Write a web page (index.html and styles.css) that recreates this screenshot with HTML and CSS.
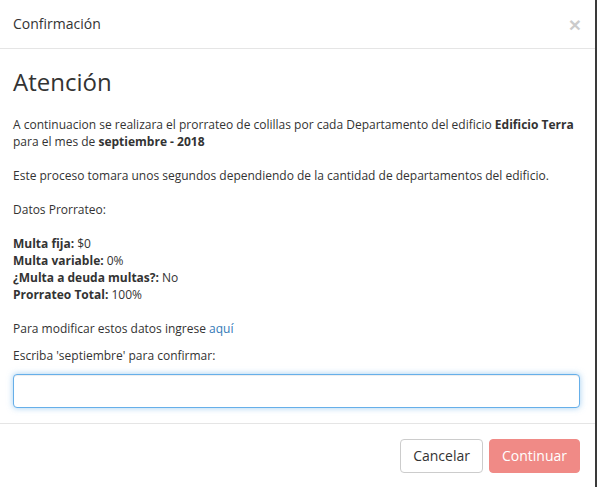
FILE: index.html
```html
<!DOCTYPE html>
<html lang="es">
<head>
    <meta charset="UTF-8">
    <meta name="viewport" content="width=device-width, initial-scale=1.0">
    <title>Confirmación</title>
    <link rel="stylesheet" href="styles.css">
</head>
<body>

<div class="modal">
    <div class="modal-header">
        <span class="modal-title">Confirmación</span>
        <button class="close" type="button">&times;</button>
    </div>

    <div class="modal-body">
        <h2>Atención</h2>
        <p>
            A continuacion se realizara el prorrateo de colillas por cada Departamento del edificio <b>Edificio Terra</b>
            para el mes de <b>septiembre - 2018</b>
            <br><br>
            Este proceso tomara unos segundos dependiendo de la cantidad de departamentos del edificio.
            <br><br>
            Datos Prorrateo:
            <br><br>
            <b>Multa fija:</b> $0<br>
            <b>Multa variable:</b> 0%<br>
            <b>¿Multa a deuda multas?:</b> No<br>
            <b>Prorrateo Total:</b> 100%
            <br><br>
            Para modificar estos datos ingrese <a href="#">aquí</a>
        </p>
        <label for="confirm-month">Escriba 'septiembre' para confirmar:</label>
        <input type="text" id="confirm-month" class="form-control">
    </div>

    <div class="modal-footer">
        <button class="btn btn-default" type="button">Cancelar</button>
        <button class="btn btn-danger" type="button" disabled>Continuar</button>
    </div>
</div>

</body>
</html>
```

FILE: styles.css
```css
body {
    margin: 0;
    background-color: #3a3a3a;
    font-family: "Open Sans", Arial, sans-serif;
    font-size: 12px;
    line-height: 17px;
    color: #333;
    overflow: hidden;
}

.modal {
    width: 597px;
    margin-left: -2px;
    background-color: #fff;
}

.modal-header {
    display: flex;
    align-items: center;
    justify-content: space-between;
    padding: 15px;
    border-bottom: 1px solid #e5e5e5;
}

.modal-title {
    font-size: 14px;
    line-height: 18px;
}

.close {
    padding: 0;
    margin-right: -1px;
    border: none;
    background: none;
    font-family: Arial, sans-serif;
    font-size: 21px;
    font-weight: bold;
    line-height: 17px;
    color: #000;
    opacity: 0.2;
    cursor: pointer;
}

.modal-body {
    padding: 15px;
}

.modal-body h2 {
    margin: 5px 0 21px;
    font-size: 24px;
    font-weight: normal;
    line-height: 26px;
}

.modal-body p {
    margin: 0 0 10px;
}

.modal-body a {
    color: #337ab7;
    text-decoration: none;
}

.modal-body label {
    display: block;
    margin-bottom: 10px;
}

.form-control {
    display: block;
    box-sizing: border-box;
    width: 100%;
    height: 34px;
    padding: 6px 12px;
    border: 1px solid #66afe9;
    border-radius: 4px;
    font-family: inherit;
    font-size: 14px;
    outline: none;
    box-shadow: inset 0 1px 1px rgba(0, 0, 0, 0.075), 0 0 6px rgba(102, 175, 233, 0.6);
}

.modal-footer {
    display: flex;
    justify-content: flex-end;
    gap: 6px;
    padding: 15px;
    border-top: 1px solid #e5e5e5;
}

.btn {
    height: 34px;
    padding: 6px 12px;
    border: 1px solid transparent;
    border-radius: 4px;
    font-family: inherit;
    font-size: 14px;
    line-height: 20px;
    cursor: pointer;
}

.btn-default {
    background-color: #fff;
    border-color: #ccc;
    color: #333;
}

.btn-danger {
    background-color: #f08a86;
    border-color: #f08a86;
    color: #fff;
}

.btn-danger:disabled {
    cursor: not-allowed;
}
```
